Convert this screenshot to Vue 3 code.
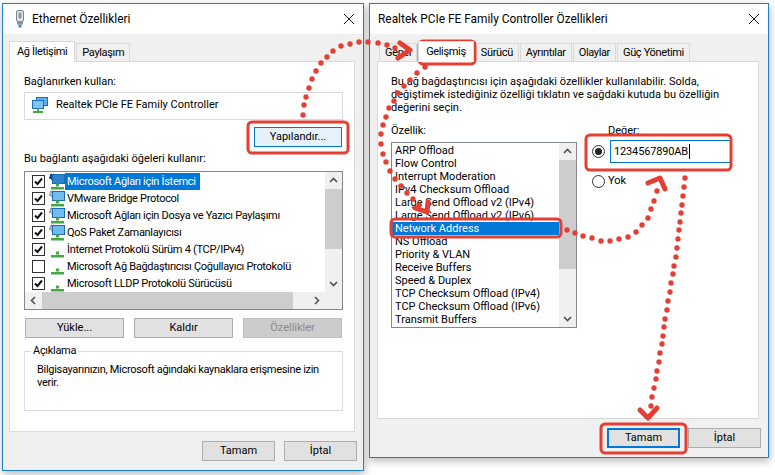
<script setup>
const components = [
  { name: 'Microsoft Ağları için İstemci', on: true, icon: 'pc', selected: true },
  { name: 'VMware Bridge Protocol', on: true, icon: 'pc' },
  { name: 'Microsoft Ağları için Dosya ve Yazıcı Paylaşımı', on: true, icon: 'pc' },
  { name: 'QoS Paket Zamanlayıcısı', on: true, icon: 'pc' },
  { name: 'İnternet Protokolü Sürüm 4 (TCP/IPv4)', on: true, icon: 'net' },
  { name: 'Microsoft Ağ Bağdaştırıcısı Çoğullayıcı Protokolü', on: false, icon: 'net' },
  { name: 'Microsoft LLDP Protokolü Sürücüsü', on: true, icon: 'net' }
]

const props = [
  'ARP Offload',
  'Flow Control',
  'Interrupt Moderation',
  'IPv4 Checksum Offload',
  'Large Send Offload v2 (IPv4)',
  'Large Send Offload v2 (IPv6)',
  'Network Address',
  'NS Offload',
  'Priority & VLAN',
  'Receive Buffers',
  'Speed & Duplex',
  'TCP Checksum Offload (IPv4)',
  'TCP Checksum Offload (IPv6)',
  'Transmit Buffers'
]

const tabs = ['Genel', 'Gelişmiş', 'Sürücü', 'Ayrıntılar', 'Olaylar', 'Güç Yönetimi']

// red dotted annotation trails, read off the screenshot
const dots = [
  [303, 115], [304, 105], [306, 97], [309, 88], [312, 79], [316, 71], [321, 63], [327, 57], [333, 51], [341, 46],
  [350, 44], [359, 42], [368, 42], [378, 43], [387, 45], [395, 48],
  [425, 67], [417, 73], [410, 80], [404, 86], [398, 93], [394, 101], [389, 108], [386, 117], [383, 125], [381, 134],
  [381, 144], [383, 154], [386, 162], [390, 171], [395, 179], [401, 186], [407, 193], [413, 199], [419, 205],
  [567, 230], [575, 233], [583, 236], [592, 238], [601, 241], [610, 241], [619, 239], [628, 237], [636, 232],
  [642, 225], [648, 218], [651, 209], [654, 201], [657, 191],
  [685, 178], [684, 187], [683, 196], [682, 205], [681, 213], [680, 222], [679, 230], [678, 239], [677, 248],
  [676, 257], [674, 266], [673, 274], [671, 283], [670, 292], [668, 301], [667, 310], [665, 319], [664, 327],
  [663, 336], [662, 344], [660, 353], [659, 362], [657, 371], [656, 379], [654, 388], [652, 397], [651, 406]
]
const arrows = [
  '400,43 410,50 398,58',
  '428,202 427,212 415,208',
  '648,183 660,178 665,189',
  '640,410 648,418 657,408'
]
const boxes = [
  [248, 122, 100, 31],
  [419, 41, 56, 23],
  [391, 219, 170, 18],
  [586, 135, 145, 35],
  [601, 424, 85, 29]
]
</script>

<template>
  <div class="desk">
    <section class="win win-left">
      <header class="title">
        <svg class="plug" viewBox="0 0 10 18" width="10" height="18">
          <rect x="1.5" y="0.5" width="7" height="11" rx="1.5" fill="#e4e6e8" stroke="#7b8288" />
          <rect x="3.5" y="2.5" width="3" height="6" fill="#8d959c" />
          <rect x="2" y="11.5" width="6" height="3" fill="#8d959c" />
          <rect x="3.5" y="14.5" width="3" height="3" fill="#3d86c6" />
        </svg>
        <span>Ethernet Özellikleri</span>
        <svg class="close" viewBox="0 0 10 10" width="10" height="10">
          <path d="M0 0 10 10M10 0 0 10" stroke="#222" fill="none" />
        </svg>
      </header>
      <div class="body">
        <div class="tabs">
          <span class="tab on first">Ağ İletişimi</span>
          <span class="tab">Paylaşım</span>
        </div>
        <div class="panel panel-left">
          <div class="label">Bağlanırken kullan:</div>
          <div class="adapter">
            <svg viewBox="0 0 16 16" width="16" height="16">
              <rect x="4.5" y="0.5" width="11" height="8" fill="#5db0ea" stroke="#1f6fb0" />
              <rect x="0.5" y="3.5" width="11" height="8" fill="#7cc4f2" stroke="#1f6fb0" />
              <path d="M5 11.500h2v2.500H5zM1 14h10v2H1z" fill="#45a845" />
            </svg>
            <span>Realtek PCIe FE Family Controller</span>
          </div>
          <div class="config-row">
            <button class="btn focus-light">Yapılandır...</button>
          </div>
          <div class="label second">Bu bağlantı aşağıdaki öğeleri kullanır:</div>

          <div class="list-left">
            <div class="rows">
              <div v-for="c in components" :key="c.name" class="row">
                <span class="check">
                  <svg v-if="c.on" viewBox="0 0 11 11" width="11" height="11">
                    <path d="M2 5.500 4.500 8 9 2.500" stroke="#111" stroke-width="2" fill="none" />
                  </svg>
                </span>
                <svg class="item-icon" viewBox="0 0 16 17" width="16" height="17">
                  <template v-if="c.icon === 'pc'">
                    <circle cx="3.500" cy="4" r="2.500" :fill="c.selected ? '#14568e' : '#c6c9cc'" :stroke="c.selected ? '#0d3f6b' : '#8d9296'" stroke-width="2" stroke-dasharray="2 1" />
                    <rect x="3.500" y="1.500" width="12" height="9" :fill="c.selected ? '#2a87cf' : '#6fbdf0'" stroke="#1f6fb0" />
                  </template>
                  <path d="M7 10.500h3v3H7zM2 14h13v2.500H2z" fill="#45a845" />
                </svg>
                <span class="row-text" :class="{ picked: c.selected }">{{ c.name }}</span>
              </div>
            </div>
            <div class="vbar">
              <svg viewBox="0 0 17 17" width="17" height="17"><path d="M5 10l3.500-3.500L12 10" class="chev" /></svg>
              <div class="vtrack"><div class="vthumb thumb-a"></div></div>
              <svg viewBox="0 0 17 17" width="17" height="17"><path d="M5 7l3.500 3.500L12 7" class="chev" /></svg>
            </div>
            <div class="hbar">
              <svg viewBox="0 0 17 17" width="17" height="17"><path d="M10 5 6.500 8.500 10 12" class="chev" /></svg>
              <div class="htrack"><div class="hthumb"></div></div>
              <svg viewBox="0 0 17 17" width="17" height="17"><path d="M7 5l3.500 3.500L7 12" class="chev" /></svg>
            </div>
            <div class="corner"></div>
          </div>

          <div class="actions">
            <button class="btn">Yükle...</button>
            <button class="btn">Kaldır</button>
            <button class="btn off">Özellikler</button>
          </div>

          <fieldset class="desc">
            <legend>Açıklama</legend>
            Bilgisayarınızın, Microsoft ağındaki kaynaklara erişmesine izin<br />verir.
          </fieldset>
        </div>
        <footer class="foot">
          <button class="btn small">Tamam</button>
          <button class="btn small">İptal</button>
        </footer>
      </div>
    </section>

    <section class="win win-right">
      <header class="title">
        <span>Realtek PCIe FE Family Controller Özellikleri</span>
        <svg class="close" viewBox="0 0 10 10" width="10" height="10">
          <path d="M0 0 10 10M10 0 0 10" stroke="#222" fill="none" />
        </svg>
      </header>
      <div class="body">
        <div class="tabs tabs-right">
          <span v-for="t in tabs" :key="t" class="tab" :class="{ on: t === 'Gelişmiş' }">{{ t }}</span>
        </div>
        <div class="panel panel-right">
          <p class="intro">
            Bu ağ bağdaştırıcısı için aşağıdaki özellikler kullanılabilir. Solda,<br />
            değiştimek istediğiniz özelliği tıklatın ve sağdaki kutuda bu özelliğin<br />
            değerini seçin.
          </p>
          <div class="columns">
            <div class="col-prop">
              <div class="label">Özellik:</div>
              <div class="list-right">
                <div class="prop-rows">
                  <div v-for="p in props" :key="p" class="prop" :class="{ picked: p === 'Network Address' }">{{ p }}</div>
                </div>
                <div class="vbar">
                  <svg viewBox="0 0 17 17" width="17" height="17"><path d="M5 10l3.500-3.500L12 10" class="chev" /></svg>
                  <div class="vtrack"><div class="vthumb thumb-b"></div></div>
                  <svg viewBox="0 0 17 17" width="17" height="17"><path d="M5 7l3.500 3.500L12 7" class="chev" /></svg>
                </div>
              </div>
            </div>
            <div class="col-value">
              <div class="label value-label">Değer:</div>
              <div class="value-row">
                <span class="radio sel"></span>
                <div class="value-input">1234567890AB<i class="caret"></i></div>
              </div>
              <div class="none-row">
                <span class="radio"></span>
                <span>Yok</span>
              </div>
            </div>
          </div>
        </div>
        <footer class="foot foot-right">
          <button class="btn small primary">Tamam</button>
          <button class="btn small">İptal</button>
        </footer>
      </div>
    </section>

    <svg class="marks" viewBox="0 0 775 475" width="775" height="475">
      <rect v-for="(b, i) in boxes" :key="'b' + i" :x="b[0]" :y="b[1]" :width="b[2]" :height="b[3]" rx="4" class="mark-box" />
      <circle v-for="(d, i) in dots" :key="'d' + i" :cx="d[0]" :cy="d[1]" r="2.700" fill="#e53e33" />
      <polyline v-for="(a, i) in arrows" :key="'a' + i" :points="a" class="mark-arrow" />
    </svg>
  </div>
</template>

<style scoped>
.desk {
  position: relative;
  width: 775px;
  height: 475px;
  overflow: hidden;
  background: #fff;
  color: #000;
  font-family: Roboto, "Liberation Sans", sans-serif;
  font-size: 11px;
  line-height: 14px;
}

.win {
  position: absolute;
  top: 3px;
  display: flex;
  flex-direction: column;
  box-sizing: border-box;
  border: 1px solid #1a80cf;
  background: #f0f0f0;
  box-shadow: 1px 3px 8px rgba(0, 0, 0, 0.28);
}

.win-left {
  left: 2px;
  width: 362px;
  height: 468px;
}

.win-right {
  left: 369px;
  width: 400px;
  height: 455px;
}

.title {
  display: flex;
  align-items: center;
  flex: none;
  height: 30px;
  padding: 0 9px 0 8px;
  background: #fff;
  font-size: 11.900px;
}

.win-left .title {
  padding-left: 12px;
}

.plug {
  margin-right: 7px;
}

.close {
  margin-left: auto;
}

.body {
  display: flex;
  flex-direction: column;
  flex: 1;
  min-height: 0;
  padding: 7px 8px 9px 6px;
}

.win-right .body {
  padding-left: 7px;
  padding-right: 9px;
}

.tabs {
  display: flex;
  align-items: flex-end;
  height: 20px;
  flex: none;
  letter-spacing: -0.35px;
}

.tabs-right {
  margin-left: 2px;
}

.tab {
  position: relative;
  box-sizing: border-box;
  height: 18px;
  margin-right: 1px;
  padding: 2px 5px 0;
  border: 1px solid #d9d9d9;
  border-bottom: none;
  background: #f0f0f0;
}

.tab.on {
  z-index: 1;
  height: 21px;
  margin-bottom: -1px;
  padding: 3px 7px 0;
  background: #fff;
}

.panel {
  flex: 1;
  min-height: 0;
  box-sizing: border-box;
  border: 1px solid #d9d9d9;
  background: #fff;
}

.panel-left {
  padding: 13px 11px 0 14px;
}

.panel-right {
  padding: 13px 0 0 13px;
}

.label.second {
  margin-top: 5px;
}

.adapter {
  display: flex;
  align-items: center;
  gap: 8px;
  box-sizing: border-box;
  height: 28px;
  margin-top: 3px;
  padding: 0 0 3px 7px;
  border: 1px solid #d9d9d9;
}

.config-row {
  display: flex;
  justify-content: flex-end;
  margin-top: 7px;
  padding-right: 1px;
}

.btn {
  box-sizing: border-box;
  height: 20px;
  padding: 0;
  border: 1px solid #adadad;
  border-radius: 0;
  background: #e1e1e1;
  color: #000;
  font: inherit;
}

.focus-light {
  width: 88px;
  border-color: #0078d7;
  background: #e5f1fb;
}

.list-left {
  display: grid;
  grid-template-columns: 1fr 17px;
  grid-template-rows: 1fr 17px;
  box-sizing: border-box;
  height: 139px;
  margin-top: 5px;
  border: 1px solid #828790;
}

.rows {
  padding-top: 1px;
  overflow: hidden;
}

.row {
  display: flex;
  align-items: center;
  height: 17px;
  padding-left: 7px;
  white-space: nowrap;
}

.check {
  display: flex;
  align-items: center;
  justify-content: center;
  flex: none;
  box-sizing: border-box;
  width: 13px;
  height: 13px;
  border: 1px solid #333;
}

.item-icon {
  margin-left: 4px;
  flex: none;
}

.row-text {
  padding: 0 4px 0 2px;
  height: 17px;
  line-height: 17px;
  letter-spacing: -0.3px;
}

.picked {
  background: #0078d7;
  color: #fff;
}

.vbar {
  display: flex;
  flex-direction: column;
  background: #f0f0f0;
}

.vbar svg,
.hbar svg {
  flex: none;
}

.chev {
  fill: none;
  stroke: #505050;
  stroke-width: 1.600;
}

.vtrack {
  flex: 1;
}

.vthumb {
  background: #cdcdcd;
}

.thumb-a {
  height: 60px;
}

.thumb-b {
  height: 109px;
}

.hbar {
  display: flex;
  background: #f0f0f0;
}

.htrack {
  flex: 1;
}

.hthumb {
  width: 251px;
  height: 100%;
  background: #cdcdcd;
}

.corner {
  background: #f0f0f0;
}

.actions {
  display: flex;
  gap: 10px;
  margin-top: 8px;
  padding: 0 1px;
}

.actions .btn {
  width: 99px;
}

.btn.off {
  border-color: #bfbfbf;
  background: #cccccc;
  color: #8a8a8a;
}

.desc {
  box-sizing: border-box;
  height: 67px;
  margin: 6px 0 0;
  padding: 5px 0 0 12px;
  border: 1px solid #dcdcdc;
  line-height: 13px;
  letter-spacing: -0.3px;
}

.desc legend {
  margin-left: -6px;
  padding: 0 2px;
  line-height: 14px;
}

.foot {
  display: flex;
  justify-content: flex-end;
  gap: 9px;
  flex: none;
  margin: 9px -2px 0 0;
}

.foot-right {
  gap: 8px;
}

.small {
  width: 73px;
}

.primary {
  border: 2px solid #0078d7;
}

.intro {
  margin: 0;
  line-height: 13px;
}

.columns {
  display: flex;
  margin-top: 10px;
}

.col-prop {
  width: 186px;
}

.list-right {
  display: flex;
  box-sizing: border-box;
  height: 186px;
  margin-top: 4px;
  border: 1px solid #828790;
}

.prop-rows {
  flex: 1;
  padding-top: 1px;
  overflow: hidden;
}

.prop {
  height: 13px;
  padding-left: 3px;
  line-height: 13px;
  white-space: nowrap;
}

.col-value {
  margin-left: 15px;
}

.value-label {
  margin-left: 16px;
}

.value-row {
  display: flex;
  align-items: center;
  margin: 2px 0 0;
}

.radio {
  flex: none;
  position: relative;
  box-sizing: border-box;
  width: 13px;
  height: 13px;
  border: 1px solid #333;
  border-radius: 50%;
  background: #fff;
}

.radio.sel::after {
  content: "";
  position: absolute;
  inset: 2px;
  border-radius: 50%;
  background: #222;
}

.value-input {
  display: flex;
  align-items: center;
  box-sizing: border-box;
  width: 122px;
  height: 23px;
  margin-left: 5px;
  padding-left: 3px;
  border: 1px solid #0078d7;
  letter-spacing: -0.15px;
}

.caret {
  width: 1px;
  height: 15px;
  margin-left: 1px;
  background: #000;
}

.none-row {
  display: flex;
  align-items: center;
  gap: 3px;
  margin-top: 11px;
}

.marks {
  position: absolute;
  inset: 0;
  pointer-events: none;
}

.mark-box {
  fill: none;
  stroke: #e53e33;
  stroke-width: 3;
}

.mark-arrow {
  fill: none;
  stroke: #e53e33;
  stroke-width: 5;
  stroke-linecap: round;
  stroke-linejoin: round;
}
</style>
